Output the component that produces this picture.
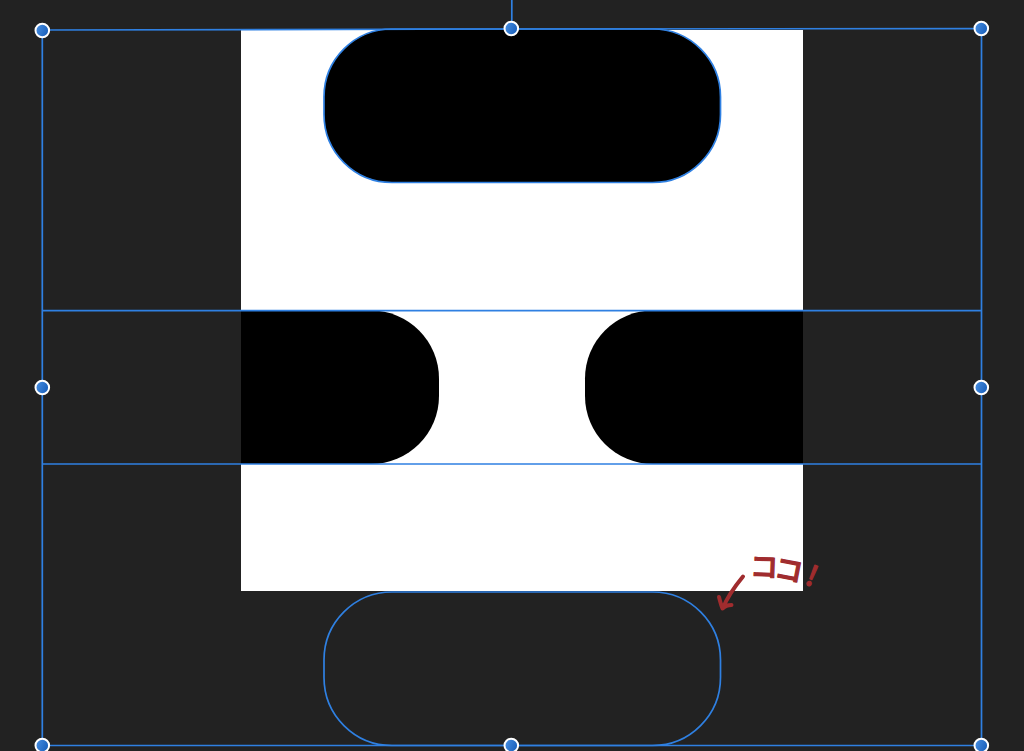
type Point = { x: number; y: number };

const handles: Point[] = [
  { x: 42, y: 30 },
  { x: 511, y: 28 },
  { x: 981, y: 28 },
  { x: 42, y: 387 },
  { x: 981, y: 387 },
  { x: 42, y: 745 },
  { x: 511, y: 745 },
  { x: 981, y: 745 },
];

const Artboard = () => {
  return (
    <g>
      <defs>
        <clipPath id="artboard">
          <rect x="241" y="30" width="562" height="561" />
        </clipPath>
      </defs>
      <rect x="241" y="30" width="562" height="561" fill="#ffffff" />
      <g clipPath="url(#artboard)" fill="#000000">
        <rect x="324" y="29" width="396.5" height="153.5" rx="68" />
        <rect x="42" y="310.5" width="397" height="153.5" rx="68" />
        <rect x="585" y="310.5" width="397" height="153.5" rx="68" />
      </g>
    </g>
  );
};

const Selection = () => {
  return (
    <g>
      <defs>
        <linearGradient id="handle" x1="0" y1="0" x2="1" y2="0.4">
          <stop offset="0" stopColor="#4b92e4" />
          <stop offset="1" stopColor="#1c62bd" />
        </linearGradient>
      </defs>
      <g fill="none" stroke="#2f80e2" strokeWidth="1.7">
        <rect x="324" y="29" width="396.5" height="153.5" rx="68" />
        <rect x="324" y="592" width="396.5" height="153.5" rx="68" />
        <path d="M42.5 310.6H981.5M42.5 464H981.5" />
        <path d="M511.8 0V28" />
        <path d="M42.3 30L511 29L981.5 28.5V745.5H42.3Z" />
      </g>
      {handles.map((handle) => (
        <circle
          key={`${handle.x}-${handle.y}`}
          cx={handle.x + 0.3}
          cy={handle.y + 0.5}
          r="6.8"
          fill="url(#handle)"
          stroke="#ffffff"
          strokeWidth="2"
        />
      ))}
    </g>
  );
};

const Note = () => {
  return (
    <g>
      <path
        d="M743 576.5C736 585 728 595 723 608M719 597C720 601 721 605 722.5 608.5C725 606 728 605 731.5 605"
        fill="none"
        stroke="#a02c2e"
        strokeWidth="4"
        strokeLinecap="round"
        strokeLinejoin="round"
      />
      <g
        fill="#a02c2e"
        stroke="#a02c2e"
        strokeWidth="1.2"
        strokeLinejoin="round"
        textAnchor="middle"
        className="font-['Noto_Sans_CJK_JP',sans-serif] text-[28px] font-medium"
      >
        <text x="764" y="577" transform="rotate(2 764 567)">
          コ
        </text>
        <text x="789" y="580" transform="rotate(11 789 570)">
          コ
        </text>
        <text x="812" y="586" transform="rotate(22 812 576)">
          !
        </text>
      </g>
    </g>
  );
};

const App = () => {
  return (
    <main className="min-h-screen w-full overflow-hidden bg-[#222222]">
      <svg
        xmlns="http://www.w3.org/2000/svg"
        viewBox="0 0 1024 751"
        className="block h-auto w-full"
      >
        <Artboard />
        <Selection />
        <Note />
      </svg>
    </main>
  );
};

export default App;
